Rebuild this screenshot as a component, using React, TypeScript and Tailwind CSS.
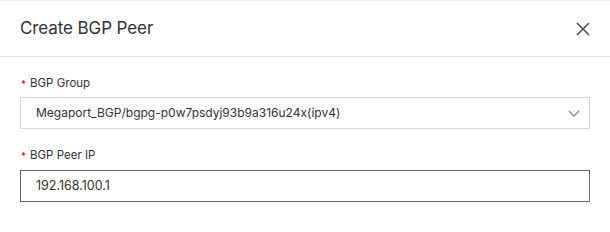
export default function App() {
  return (
    <div
      className="w-[610px] h-[232px] bg-white border-t border-[#f0f0f0] text-[#333]"
      style={{ fontFamily: 'Inter, "Noto Sans", sans-serif' }}
    >
      {/* Header */}
      <div className="h-[56px] flex items-center justify-between pl-5 pr-5 border-b border-[#e8e8e8]">
        <h2 className="text-[17px] leading-none text-[#333] tracking-[-0.1px]">Create BGP Peer</h2>
        <button className="w-[14px] h-[14px] text-[#555]" aria-label="Close">
          <svg viewBox="0 0 14 14" width="14" height="14" fill="none" stroke="currentColor" strokeWidth="1.7">
            <path d="M1 1L13 13M13 1L1 13" />
          </svg>
        </button>
      </div>

      {/* Body */}
      <div className="px-5 pt-[19px]">
        <label className="flex items-center h-4 text-[11.5px] text-[#333] mb-[5px]">
          <span className="text-[#e4002b] text-[10px] w-[10px] pl-[1px]">*</span>
          BGP Group
        </label>
        <div className="h-8 border border-[#d9d9d9] flex items-center justify-between pl-[15px] pr-[9px] text-[12px] text-[#333]">
          <span>Megaport_BGP/bgpg-p0w7psdyj93b9a316u24x(ipv4)</span>
          <svg viewBox="0 0 12 7" width="12" height="7" fill="none" stroke="#888" strokeWidth="1.3">
            <path d="M1 1L6 6L11 1" />
          </svg>
        </div>

        <label className="flex items-center h-4 text-[11.5px] text-[#333] mt-[19px] mb-[6px]">
          <span className="text-[#e4002b] text-[10px] w-[10px] pl-[1px]">*</span>
          BGP Peer IP
        </label>
        <div className="h-8 border border-[#666] flex items-center pl-[15px] text-[12.5px] text-[#333]">
          192.168.100.1
        </div>
      </div>
    </div>
  );
}
